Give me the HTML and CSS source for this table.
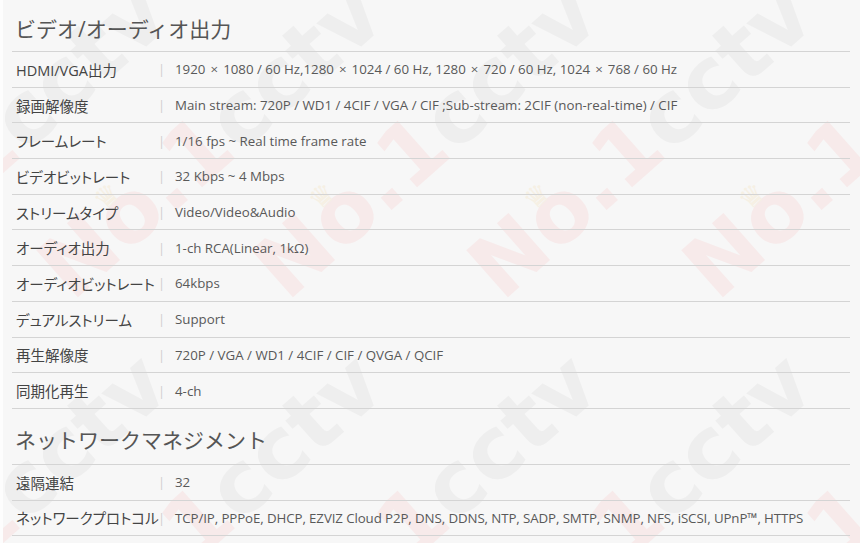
FILE: index.html
```html
<!DOCTYPE html>
<html lang="ja">
<head>
<meta charset="utf-8">
<title>仕様</title>
<link rel="stylesheet" href="styles.css">
</head>
<body>
<div class="page">
  <div class="watermark" aria-hidden="true">
    <div class="wm-cell"><span class="wm"><span class="wm-no">No.1</span><span class="wm-cc">cctv</span></span></div>
    <div class="wm-cell"><span class="wm"><span class="wm-no">No.1</span><span class="wm-cc">cctv</span></span></div>
    <div class="wm-cell"><span class="wm"><span class="wm-no">No.1</span><span class="wm-cc">cctv</span></span></div>
    <div class="wm-cell"><span class="wm"><span class="wm-no">No.1</span><span class="wm-cc">cctv</span></span></div>
    <div class="wm-cell"><span class="wm"><span class="wm-no">No.1</span><span class="wm-cc">cctv</span></span></div>
    <div class="wm-cell"><span class="wm"><span class="wm-no">No.1</span><span class="wm-cc">cctv</span></span></div>
    <div class="wm-cell"><span class="wm"><span class="wm-no">No.1</span><span class="wm-cc">cctv</span></span></div>
    <div class="wm-cell"><span class="wm"><span class="wm-no">No.1</span><span class="wm-cc">cctv</span></span></div>
    <div class="wm-cell"><span class="wm"><span class="wm-no">No.1</span><span class="wm-cc">cctv</span></span></div>
    <div class="wm-cell"><span class="wm"><span class="wm-no">No.1</span><span class="wm-cc">cctv</span></span></div>
    <div class="wm-cell"><span class="wm"><span class="wm-no">No.1</span><span class="wm-cc">cctv</span></span></div>
    <div class="wm-cell"><span class="wm"><span class="wm-no">No.1</span><span class="wm-cc">cctv</span></span></div>
  </div>
  <div class="content">
    <section class="spec">
      <h2 class="spec-title">ビデオ/オーディオ出力</h2>
      <div class="spec-row"><div class="spec-label">HDMI/VGA出力</div><div class="spec-sep">|</div><div class="spec-value">1920 <span class="x">×</span> 1080 / 60 Hz,1280 <span class="x">×</span> 1024 / 60 Hz, 1280 <span class="x">×</span> 720 / 60 Hz, 1024 <span class="x">×</span> 768 / 60 Hz</div></div>
      <div class="spec-row"><div class="spec-label">録画解像度</div><div class="spec-sep">|</div><div class="spec-value">Main stream: 720P / WD1 / 4CIF / VGA / CIF ;Sub-stream: 2CIF (non-real-time) / CIF</div></div>
      <div class="spec-row"><div class="spec-label">フレームレート</div><div class="spec-sep">|</div><div class="spec-value">1/16 fps ~ Real time frame rate</div></div>
      <div class="spec-row"><div class="spec-label">ビデオビットレート</div><div class="spec-sep">|</div><div class="spec-value">32 Kbps ~ 4 Mbps</div></div>
      <div class="spec-row"><div class="spec-label">ストリームタイプ</div><div class="spec-sep">|</div><div class="spec-value">Video/Video&amp;Audio</div></div>
      <div class="spec-row"><div class="spec-label">オーディオ出力</div><div class="spec-sep">|</div><div class="spec-value">1-ch RCA(Linear, 1kΩ)</div></div>
      <div class="spec-row"><div class="spec-label">オーディオビットレート</div><div class="spec-sep">|</div><div class="spec-value">64kbps</div></div>
      <div class="spec-row"><div class="spec-label">デュアルストリーム</div><div class="spec-sep">|</div><div class="spec-value">Support</div></div>
      <div class="spec-row"><div class="spec-label">再生解像度</div><div class="spec-sep">|</div><div class="spec-value">720P / VGA / WD1 / 4CIF / CIF / QVGA / QCIF</div></div>
      <div class="spec-row"><div class="spec-label">同期化再生</div><div class="spec-sep">|</div><div class="spec-value">4-ch</div></div>
    </section>
    <section class="spec">
      <h2 class="spec-title">ネットワークマネジメント</h2>
      <div class="spec-row"><div class="spec-label">遠隔連結</div><div class="spec-sep">|</div><div class="spec-value">32</div></div>
      <div class="spec-row"><div class="spec-label">ネットワークプロトコル</div><div class="spec-sep">|</div><div class="spec-value spec-value-long">TCP/IP, PPPoE, DHCP, EZVIZ Cloud P2P, DNS, DDNS, NTP, SADP, SMTP, SNMP, NFS, iSCSI, UPnP™, HTTPS</div></div>
    </section>
  </div>
</div>
</body>
</html>
```
FILE: styles.css
```css
html, body {
  margin: 0;
  padding: 0;
}
body {
  background: #f7f7f7;
  font-family: "Open Sans", "Noto Sans CJK JP", sans-serif;
}
.page {
  position: relative;
  width: 860px;
  height: 543px;
  overflow: hidden;
  box-sizing: border-box;
  border-left: 3px solid #fdfdfd;
}
.watermark {
  position: absolute;
  top: -45px;
  left: -115px;
  display: grid;
  grid-template-columns: repeat(6, 215px);
  grid-auto-rows: 370px;
  z-index: 0;
  pointer-events: none;
}
.wm-cell {
  display: flex;
  align-items: center;
  justify-content: center;
}
.wm {
  display: inline-block;
  white-space: nowrap;
  font-family: "DejaVu Sans", sans-serif;
  font-weight: bold;
  font-size: 86px;
  line-height: 1;
  transform: rotate(-41.5deg);
}
.wm-no {
  position: relative;
  color: #f7eaea;
}
.wm-no::before {
  content: "♛";
  position: absolute;
  left: 84px;
  top: 10px;
  font-size: 28px;
  line-height: 1;
  color: #f6f0e4;
}
.wm-cc { color: #eeeeee; }
.content {
  position: relative;
  z-index: 1;
  margin-left: 9px;
  width: 838px;
}
.spec-title {
  margin: 0;
  box-sizing: border-box;
  height: 56px;
  padding: 18px 0 0 3px;
  line-height: 26px;
  font-size: 21px;
  font-weight: normal;
  color: #555;
  border-bottom: 1px solid #d4d4d4;
}
.spec:first-child .spec-title {
  height: 52px;
  padding-top: 16px;
}
.spec-row {
  display: flex;
  align-items: center;
  box-sizing: border-box;
  height: 35.7px;
  border-bottom: 1px solid #d4d4d4;
}
.spec-label {
  width: 142px;
  flex: none;
  padding-left: 4px;
  font-size: 14.5px;
  color: #444;
  white-space: nowrap;
  font-feature-settings: "palt";
}
.spec-sep {
  width: 17px;
  flex: none;
  font-size: 13px;
  color: #cfcfcf;
}
.spec-value {
  font-size: 13.3px;
  color: #595959;
  white-space: nowrap;
}
.spec-value-long {
  letter-spacing: -0.1px;
}
.x {
  padding: 0 1.6px;
}
```
